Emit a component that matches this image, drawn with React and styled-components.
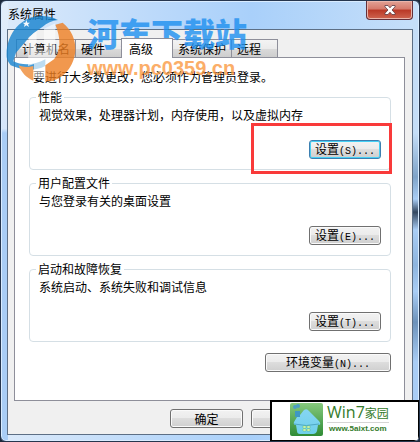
import React from 'react';
import styled, { createGlobalStyle } from 'styled-components';

const tabs = ['计算机名', '硬件', '高级', '系统保护', '远程'];

const groups = [
  {
    title: '性能',
    text: '视觉效果，处理器计划，内存使用，以及虚拟内存',
    hotkey: 'S',
    focused: true,
  },
  { title: '用户配置文件', text: '与您登录有关的桌面设置', hotkey: 'E' },
  {
    title: '启动和故障恢复',
    text: '系统启动、系统失败和调试信息',
    hotkey: 'T',
  },
];

export default function App() {
  return (
    <>
      <GlobalStyle />
      <Window>
        <TitleBar>
          <Title>系统属性</Title>
          <CloseButton aria-label="关闭">
            <svg width="12" height="10" viewBox="0 0 12 10">
              <path
                d="M1 .5h3l2 2.3L8 .5h3v1.3L8 5l3 3.200v1.300H8L6 7.200 4 9.500H1V8.200L4 5 1 1.800z"
                fill="#fff"
                stroke="#5b3a42"
                strokeWidth=".8"
              />
            </svg>
          </CloseButton>
        </TitleBar>
        <Client>
          <Tabs role="tablist">
            {tabs.map((tab) => (
              <Tab key={tab} role="tab" aria-selected={tab === '高级'}>
                {tab}
              </Tab>
            ))}
          </Tabs>
          <Panel role="tabpanel">
            <Notice>要进行大多数更改，您必须作为管理员登录。</Notice>
            {groups.map((group) => (
              <SettingsGroup key={group.title} {...group} />
            ))}
            <Actions>
              <Button $width="126px">
                环境变量<Hotkey>(N)...</Hotkey>
              </Button>
            </Actions>
          </Panel>
          <Footer>
            <Button>确定</Button>
            <Button>取消</Button>
            <Button>应用</Button>
          </Footer>
        </Client>
        <Watermark />
        <SiteBadge />
      </Window>
    </>
  );
}

function SettingsGroup({ title, text, hotkey, focused }) {
  return (
    <Group>
      <legend>{title}</legend>
      <GroupBody>
        <p>{text}</p>
        <Button $focused={focused}>
          设置<Hotkey>({hotkey})...</Hotkey>
        </Button>
        {focused ? <Highlight /> : ''}
      </GroupBody>
    </Group>
  );
}

function Watermark() {
  return (
    <Mark>
      <svg width="80" height="72" viewBox="0 0 240 216">
        <path
          d="M8 136C4 66 52 12 112 12c20 0 36 4 50 12-18 2-34 10-46 20l-28 20-16 16-36 42-8 26c24 12 60 14 96-6v20c-34 18-72 12-104-2-6-8-10-14-12-24z"
          fill="#1683cf"
        />
        <path
          d="M74 76l24-18v62l22-4V50l34-16v106l-24 10-6 50-34-2v-42l-18 6z"
          fill="#fff"
          opacity=".65"
        />
        <path
          d="M154 38l22-6c26 20 40 52 38 84-4 48-34 82-74 92h-16v-48l26-18c20-24 22-62 4-104z"
          fill="#ee7f22"
        />
        <path d="M44 160c14 6 28 6 44 2v44c-20-8-36-24-44-46z" fill="#ee8a35" />
        <path
          d="M67 24l3 8h8l-6 5 3 8-8-5-7 5 2-8-6-5h8z"
          fill="#fff"
        />
      </svg>
      <MarkText>
        <strong>河东下载站</strong>
        <span>www.pc0359.cn</span>
      </MarkText>
    </Mark>
  );
}

function SiteBadge() {
  return (
    <Badge>
      <svg width="33" height="33" viewBox="0 0 33 33">
        <defs>
          <linearGradient id="tile" x1="0" y1="0" x2="0" y2="1">
            <stop offset="0" stopColor="#86c97d" />
            <stop offset="1" stopColor="#2f8b35" />
          </linearGradient>
          <linearGradient id="house" x1="0" y1="0" x2="0" y2="1">
            <stop offset="0" stopColor="#86d5f3" />
            <stop offset="1" stopColor="#6fd0ea" />
          </linearGradient>
        </defs>
        <rect width="33" height="33" rx="2" fill="url(#tile)" />
        <path
          d="M5 8h5v4l4-5q3-2 5 1l10 10q3 4-1 4l-1 6q-1 3-4 3H10q-3 0-3-3l-1-6q-3 0-2-3l3-5z"
          fill="url(#house)"
        />
        <path d="M4 21q12 3 25 0" fill="none" stroke="#4fa9c4" />
        <circle cx="5" cy="4" r="2" fill="#4b9fc5" />
        <circle cx="8" cy="3" r="2" fill="#4b9fc5" />
        <path d="M5 8h5v6H5z" fill="#3f98c3" />
        <path
          d="M13 23h3v2h-3zm4 0h3v2h-3zm-4 3h3v2h-3zm4 0h3v2h-3z"
          fill="#e9ffb9"
          stroke="#63bf77"
          strokeWidth=".5"
        />
      </svg>
      <BadgeText>
        <strong>
          Win7<small>家园</small>
        </strong>
        <span>www.5aixt.com</span>
      </BadgeText>
    </Badge>
  );
}

const GlobalStyle = createGlobalStyle`
  * {
    box-sizing: border-box;
  }
  body {
    margin: 0;
    background: #1d2a3c;
    color: #000;
    font: 12px/14px 'Noto Sans CJK SC', sans-serif;
  }
`;

const Window = styled.main`
  position: relative;
  display: flex;
  flex-direction: column;
  min-height: 100vh;
  padding: 0 6px 6px;
  overflow: hidden;
  border: 1px solid #26364e;
  border-radius: 6px;
  background: linear-gradient(
        #c5def8 0,
        #c5def8 30%,
        #7fa3c8 40%,
        #a9cdf5 45%,
        #34475f 48%,
        #a9cdf5 52%,
        #8db4de 60%,
        #a9cdf5 66%,
        #6d92ba 73%,
        #a9cdf5 82%
      )
      right / 7px 100% no-repeat,
    linear-gradient(#e2eefb 0, #d5e6fa 29%, #a9cdf5 30%) left / 7px 100%
      no-repeat,
    linear-gradient(90deg, #dceafa 0, #b9d8fa 40%, #a9d0fa 60%, #c6dff9 100%);
  box-shadow: inset 0 0 0 1px #d9ecff;
`;

const TitleBar = styled.header`
  display: flex;
  justify-content: space-between;
  height: 28px;
`;

const Title = styled.h1`
  margin: 0;
  padding: 6px 1px;
  font-size: 12px;
  font-weight: 400;
  line-height: 14px;
`;

const CloseButton = styled.button`
  display: flex;
  align-items: center;
  justify-content: center;
  width: 47px;
  height: 19px;
  padding: 0;
  border: 1px solid #64303a;
  border-top: 0;
  border-radius: 0 0 4px 4px;
  background: linear-gradient(#e2a296, #d5796a 45%, #b93826 50%, #cf6550);
  box-shadow: inset 0 0 0 1px #eab5ab;
`;

const Client = styled.section`
  display: flex;
  flex: 1;
  flex-direction: column;
  padding: 8px 7px 6px 6px;
  border: 1px solid #5d6f85;
  background: #f0f0f0;
`;

const Tabs = styled.div`
  display: flex;
  align-items: flex-end;
  height: 19px;
  padding-left: 2px;
`;

const Tab = styled.button`
  min-width: 47px;
  height: 18px;
  margin-right: -1px;
  padding: 0 5px;
  border: 1px solid #8e8f9a;
  border-bottom: 0;
  background: linear-gradient(#f3f3f3, #ebebeb 50%, #dadada 51%, #cecece);
  color: #000;
  font: inherit;
  text-align: left;

  &[aria-selected='true'] {
    z-index: 1;
    align-self: flex-start;
    min-width: 52px;
    height: 20px;
    padding: 0 7px;
    background: #fff;
  }
`;

const Panel = styled.section`
  display: flex;
  flex: 1;
  flex-direction: column;
  gap: 6px;
  padding: 12px 13px 12px 14px;
  border: 1px solid #8e8f9a;
  background: #fff;
`;

const Notice = styled.p`
  margin: 0;
  padding-left: 4px;
`;

const Group = styled.fieldset`
  min-width: 0;
  margin: 0;
  padding: 4px 9px 10px;
  border: 1px solid #d5dfe5;
  border-radius: 4px;

  legend {
    margin-left: -3px;
    padding: 0 2px;
  }
`;

const GroupBody = styled.div`
  position: relative;
  display: flex;
  flex-direction: column;
  align-items: flex-end;
  gap: 18px;

  p {
    align-self: flex-start;
    margin: 0;
  }
`;

const Highlight = styled.div`
  position: absolute;
  right: -11px;
  bottom: -15px;
  width: 141px;
  height: 51px;
  border: 3px solid #f93a3a;
  pointer-events: none;
`;

const Button = styled.button`
  width: ${(props) => props.$width || '72px'};
  height: 19px;
  padding: 0;
  border: 1px solid ${(props) => (props.$focused ? '#3c7fb1' : '#707070')};
  border-radius: 3px;
  background: linear-gradient(#f2f2f2, #ebebeb 49%, #dddddd 50%, #cfcfcf);
  box-shadow: inset 0 0 0 1px
    ${(props) => (props.$focused ? '#46d0f5' : '#fafafa')};
  color: #000;
  font: inherit;
  line-height: 16px;
  white-space: nowrap;
`;

const Hotkey = styled.span`
  font: 10px/14px 'Liberation Mono', monospace;
`;

const Actions = styled.div`
  display: flex;
  justify-content: flex-end;
  padding-top: 5px;
`;

const Footer = styled.footer`
  display: flex;
  justify-content: flex-end;
  gap: 8px;
  padding-top: 8px;

  button {
    width: 73px;
  }
`;

const Mark = styled.div`
  position: absolute;
  top: 11px;
  left: 3px;
  display: flex;
  opacity: 0.8;
  pointer-events: none;
`;

const MarkText = styled.div`
  display: flex;
  flex-direction: column;
  gap: 4px;
  padding-left: 3px;
  line-height: 40px;
  white-space: nowrap;

  strong {
    color: #1e90f0;
    font-size: 32px;
    font-weight: 900;
  }
  span {
    color: #fb9a43;
    font: bold 20px/24px 'Liberation Sans', sans-serif;
  }
`;

const Badge = styled.aside`
  position: absolute;
  right: -1px;
  bottom: -1px;
  display: flex;
  gap: 4px;
  width: 150px;
  height: 42px;
  padding: 1px 18px;
  border: 2px solid #000;
  background: #fff;
`;

const BadgeText = styled.div`
  display: flex;
  flex-direction: column;
  color: #347b2b;
  white-space: nowrap;

  strong {
    border-bottom: 1px solid #d5d5d5;
    font: 16px/19px 'Open Sans', sans-serif;
  }
  small {
    font: 12px/18px 'Noto Sans CJK SC', sans-serif;
  }
  span {
    padding-left: 2px;
    font: bold 8px/12px 'Liberation Sans', sans-serif;
  }
`;
